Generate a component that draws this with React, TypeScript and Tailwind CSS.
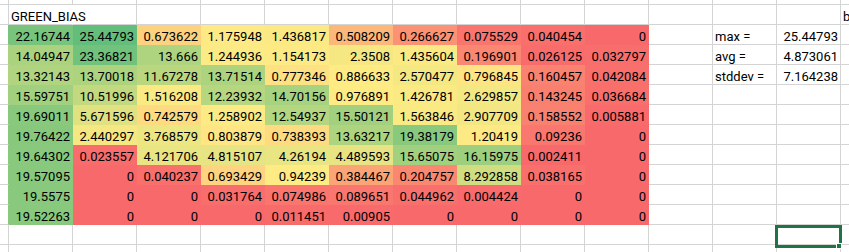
import React from "react";

const data: number[][] = [
  [22.16744, 25.44793, 0.673622, 1.175948, 1.436817, 0.508209, 0.266627, 0.075529, 0.040454, 0],
  [14.04947, 23.36821, 13.666, 1.244936, 1.154173, 2.3508, 1.435604, 0.196901, 0.026125, 0.032797],
  [13.32143, 13.70018, 11.67278, 13.71514, 0.777346, 0.886633, 2.570477, 0.796845, 0.160457, 0.042084],
  [15.59751, 10.51996, 1.516208, 12.23932, 14.70156, 0.976891, 1.426781, 2.629857, 0.143245, 0.036684],
  [19.69011, 5.671596, 0.742579, 1.258902, 12.54937, 15.50121, 1.563846, 2.907709, 0.158552, 0.005881],
  [19.76422, 2.440297, 3.768579, 0.803879, 0.738393, 13.63217, 19.38179, 1.20419, 0.09236, 0],
  [19.64302, 0.023557, 4.121706, 4.815107, 4.26194, 4.489593, 15.65075, 16.15975, 0.002411, 0],
  [19.57095, 0, 0.040237, 0.693429, 0.94239, 0.384467, 0.204757, 8.292858, 0.038165, 0],
  [19.5575, 0, 0, 0.031764, 0.074986, 0.089651, 0.044962, 0.004424, 0, 0],
  [19.52263, 0, 0, 0, 0.011451, 0.00905, 0, 0, 0, 0],
];

const stats: [string, string][] = [
  ["max =", "25.44793"],
  ["avg =", "4.873061"],
  ["stddev =", "7.164238"],
];

// excel 3-colour scale: red -> yellow (50th percentile) -> green
const RED = [248, 105, 107];
const YELLOW = [255, 235, 132];
const GREEN = [99, 190, 123];

const sorted = data.flat().sort((a, b) => a - b);
const lo = sorted[0];
const hi = sorted[sorted.length - 1];
const rank = 0.5 * (sorted.length - 1);
const mid = sorted[Math.floor(rank)] + (rank % 1) * (sorted[Math.ceil(rank)] - sorted[Math.floor(rank)]);

function mix(a: number[], b: number[], t: number) {
  const c = a.map((v, i) => Math.round(v + (b[i] - v) * t));
  return `rgb(${c[0]}, ${c[1]}, ${c[2]})`;
}

function scale(v: number) {
  if (v <= mid) return mix(RED, YELLOW, mid === lo ? 0 : (v - lo) / (mid - lo));
  return mix(YELLOW, GREEN, (v - mid) / (hi - mid));
}

function fmt(v: number) {
  return v === 0 ? "0" : String(v);
}

const cell = "box-border shrink-0 border-r border-b border-[#d4d4d4] flex items-end leading-[15px] overflow-hidden whitespace-nowrap";

function Blank({ w = "w-[64px]" }: { w?: string }) {
  return <div className={`${cell} ${w}`} />;
}

export default function App() {
  return (
    <div className="w-[849px] h-[252px] overflow-hidden bg-white text-black text-[13px] font-['Roboto',sans-serif]">
      {/* partial row at the top */}
      <div className="flex h-[5px]">
        <Blank w="w-[9px]" />
        {Array.from({ length: 13 }).map((_, i) => (
          <Blank key={i} />
        ))}
        <Blank w="w-[9px]" />
      </div>

      {/* title row */}
      <div className="flex h-[20px]">
        <Blank w="w-[9px]" />
        <div className={`${cell} w-[64px] pl-[2px] overflow-visible border-r-transparent`}>GREEN_BIAS</div>
        {Array.from({ length: 12 }).map((_, i) => (
          <Blank key={i} />
        ))}
        <div className={`${cell} w-[9px] pl-[2px]`}>b</div>
      </div>

      {/* data rows */}
      {data.map((row, r) => (
        <div key={r} className="flex h-[20px]">
          <div className={`${cell} w-[9px]`} style={{ borderRightColor: scale(row[0]) }} />
          {row.map((v, c) => {
            const bg = scale(v);
            return (
              <div
                key={c}
                className={`${cell} w-[64px] justify-end pr-[2px]`}
                style={{ backgroundColor: bg, borderColor: bg }}
              >
                {fmt(v)}
              </div>
            );
          })}
          <Blank />
          {stats[r] ? (
            <>
              <div className={`${cell} w-[64px] pl-[2px]`}>{stats[r][0]}</div>
              <div className={`${cell} w-[64px] justify-end pr-[2px]`}>{stats[r][1]}</div>
            </>
          ) : (
            <>
              <Blank />
              <Blank />
            </>
          )}
          <Blank w="w-[9px]" />
        </div>
      ))}

      {/* empty rows below */}
      {[0, 1].map((r) => (
        <div key={r} className="flex h-[20px]">
          <Blank w="w-[9px]" />
          {Array.from({ length: 12 }).map((_, i) => (
            <Blank key={i} />
          ))}
          <div className={`${cell} w-[64px] relative overflow-visible`}>
            {r === 0 && (
              <div className="absolute left-[-2px] top-0 w-[67px] h-[23px] border-[3px] border-[#217346] z-10">
                <div className="absolute right-[-3px] bottom-[-4px] w-[6px] h-[6px] bg-[#217346] border border-white" />
              </div>
            )}
          </div>
          <Blank w="w-[9px]" />
        </div>
      ))}
    </div>
  );
}
